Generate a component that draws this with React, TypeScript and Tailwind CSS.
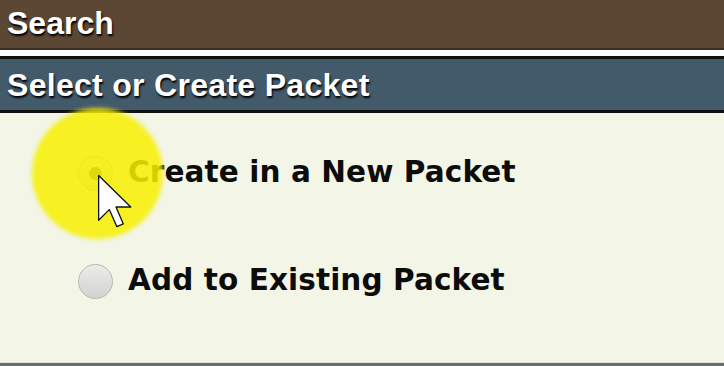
export default function App() {
  const headerFont = { fontFamily: '"Liberation Sans", Arial, sans-serif' }
  const bodyFont = { fontFamily: '"DejaVu Sans", Verdana, sans-serif' }

  return (
    <div className="relative w-[724px] h-[366px] overflow-hidden bg-[#f3f5e6]">
      {/* Search bar */}
      <div className="h-[50px] bg-[#5b4734] border-b-2 border-[#3b2f25] flex items-center pl-[7px]">
        <span
          className="text-[32px] font-bold text-white leading-none mt-[-2px] [text-shadow:1px_2px_2px_#000]"
          style={headerFont}
        >
          Search
        </span>
      </div>
      <div className="h-[6px] bg-white" />

      {/* Section header */}
      <div className="h-[57px] bg-[#435a6b] border-y-[3px] border-[#111] flex items-center pl-[7px]">
        <span
          className="text-[32px] font-bold text-white leading-none mt-[1px] tracking-[0.3px] [text-shadow:1px_2px_2px_#000]"
          style={headerFont}
        >
          Select or Create Packet
        </span>
      </div>

      {/* Options */}
      <div className="h-[249px] bg-[#f3f5e6] pt-[40px] pl-[78px] flex flex-col gap-[68px]">
        <label className="h-[40px] flex items-center gap-[15px]">
          <span className="w-[35px] h-[35px] rounded-full border border-[#b5b5b0] bg-gradient-to-b from-[#f0f0ee] to-[#d6d6d4] flex items-center justify-center">
            <span className="w-[13px] h-[13px] rounded-full bg-[#555]" />
          </span>
          <span className="text-[29.5px] font-bold text-[#0c0c0c] leading-none tracking-[0.1px]" style={bodyFont}>
            Create in a New Packet
          </span>
        </label>
        <label className="h-[40px] flex items-center gap-[15px]">
          <span className="w-[35px] h-[35px] rounded-full border border-[#b8b8b4] bg-gradient-to-b from-[#ececea] to-[#d2d2d0]" />
          <span className="text-[29.5px] font-bold text-[#0c0c0c] leading-none tracking-[0.1px]" style={bodyFont}>
            Add to Existing Packet
          </span>
        </label>
      </div>
      <div className="h-px bg-[#dde2d4]" />
      <div className="h-[3px] bg-[#66716f]" />

      {/* click highlight */}
      <div className="absolute left-[32px] top-[108px] w-[131px] h-[131px] rounded-full bg-[#f7f000]/85 blur-[2px]" />

      {/* cursor */}
      <svg
        className="absolute left-[97px] top-[174px]"
        width="38"
        height="55"
        viewBox="0 0 13 19"
      >
        <path
          d="M0.5 0.5 L0.5 16 L4.2 12.3 L6.8 18.2 L9 17.2 L6.5 11.4 L11.6 11.4 Z"
          fill="#fff"
          stroke="#111"
          strokeWidth="0.45"
          strokeLinejoin="round"
        />
      </svg>
    </div>
  )
}
